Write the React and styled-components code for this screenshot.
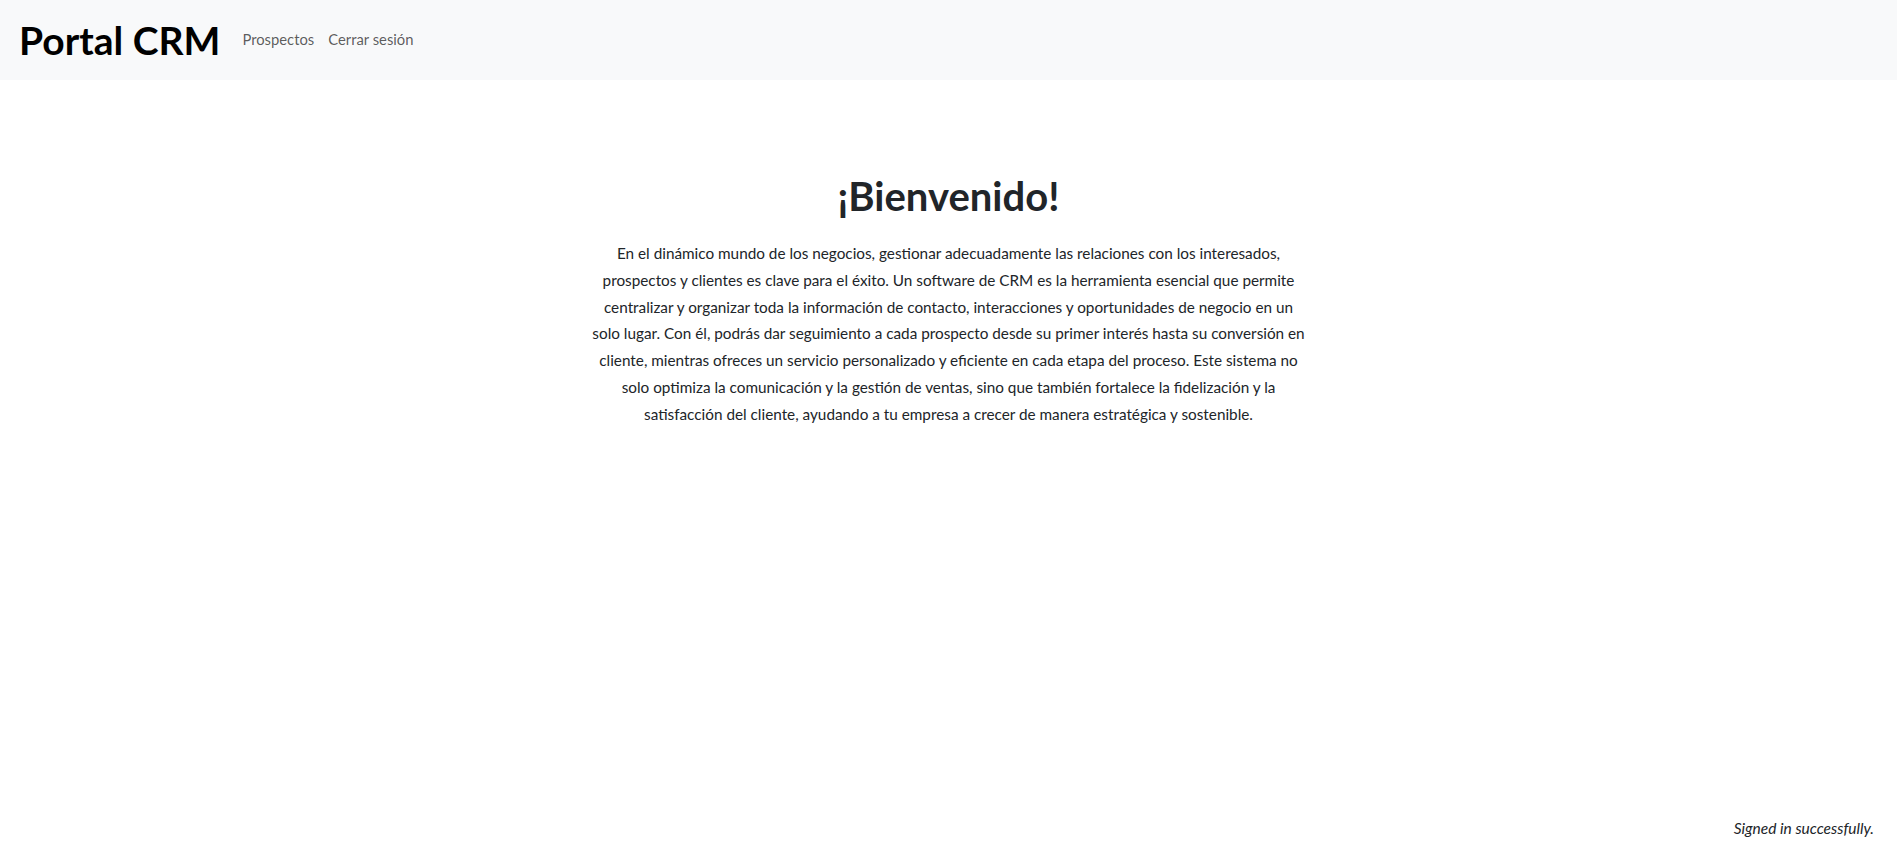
import styled, { createGlobalStyle } from "styled-components";

const GlobalStyle = createGlobalStyle`
  body {
    margin: 0;
    font-family: "Segoe UI", Lato, "Noto Sans", sans-serif;
    color: #212529;
    background: #fff;
  }
`;

const App = () => {
  return (
    <>
      <GlobalStyle />
      <Page>
        <Navbar>
          <Brand>Portal CRM</Brand>
          <NavLinks>
            <NavLink href="#">Prospectos</NavLink>
            <NavLink href="#">Cerrar sesión</NavLink>
          </NavLinks>
        </Navbar>
        <Main>
          <Title>¡Bienvenido!</Title>
          <Intro>
            En el dinámico mundo de los negocios, gestionar adecuadamente las
            relaciones con los interesados, prospectos y clientes es clave para
            el éxito. Un software de CRM es la herramienta esencial que permite
            centralizar y organizar toda la información de contacto,
            interacciones y oportunidades de negocio en un solo lugar. Con él,
            podrás dar seguimiento a cada prospecto desde su primer interés
            hasta su conversión en cliente, mientras ofreces un servicio
            personalizado y eficiente en cada etapa del proceso. Este sistema no
            solo optimiza la comunicación y la gestión de ventas, sino que
            también fortalece la fidelización y la satisfacción del cliente,
            ayudando a tu empresa a crecer de manera estratégica y sostenible.
          </Intro>
        </Main>
        <Notice>Signed in successfully.</Notice>
      </Page>
    </>
  );
};

const Page = styled.div`
  display: flex;
  flex-direction: column;
  min-height: 853px;
`;

const Navbar = styled.nav`
  display: flex;
  align-items: center;
  gap: 22px;
  height: 80px;
  padding: 0 19px;
  box-sizing: border-box;
  background-color: #f8f9fa;
`;

const Brand = styled.span`
  font-size: 39px;
  font-weight: 700;
  color: #000;
  line-height: 1;
  margin-top: 1px;
`;

const NavLinks = styled.div`
  display: flex;
  gap: 14px;
  margin-top: -2px;
`;

const NavLink = styled.a`
  font-size: 14.8px;
  color: rgba(0, 0, 0, 0.65);
  text-decoration: none;
`;

const Main = styled.main`
  flex: 1;
  display: flex;
  flex-direction: column;
  align-items: center;
  padding-top: 92px;
`;

const Title = styled.h1`
  margin: 0 0 20px;
  font-size: 40px;
  font-weight: 700;
  line-height: 1.2;
`;

const Intro = styled.p`
  margin: 0;
  max-width: 720px;
  text-align: center;
  font-size: 15.3px;
  line-height: 26.8px;
`;

const Notice = styled.p`
  margin: 0 23px 16px 0;
  text-align: right;
  font-style: italic;
  font-size: 15.5px;
`;

export default App;
